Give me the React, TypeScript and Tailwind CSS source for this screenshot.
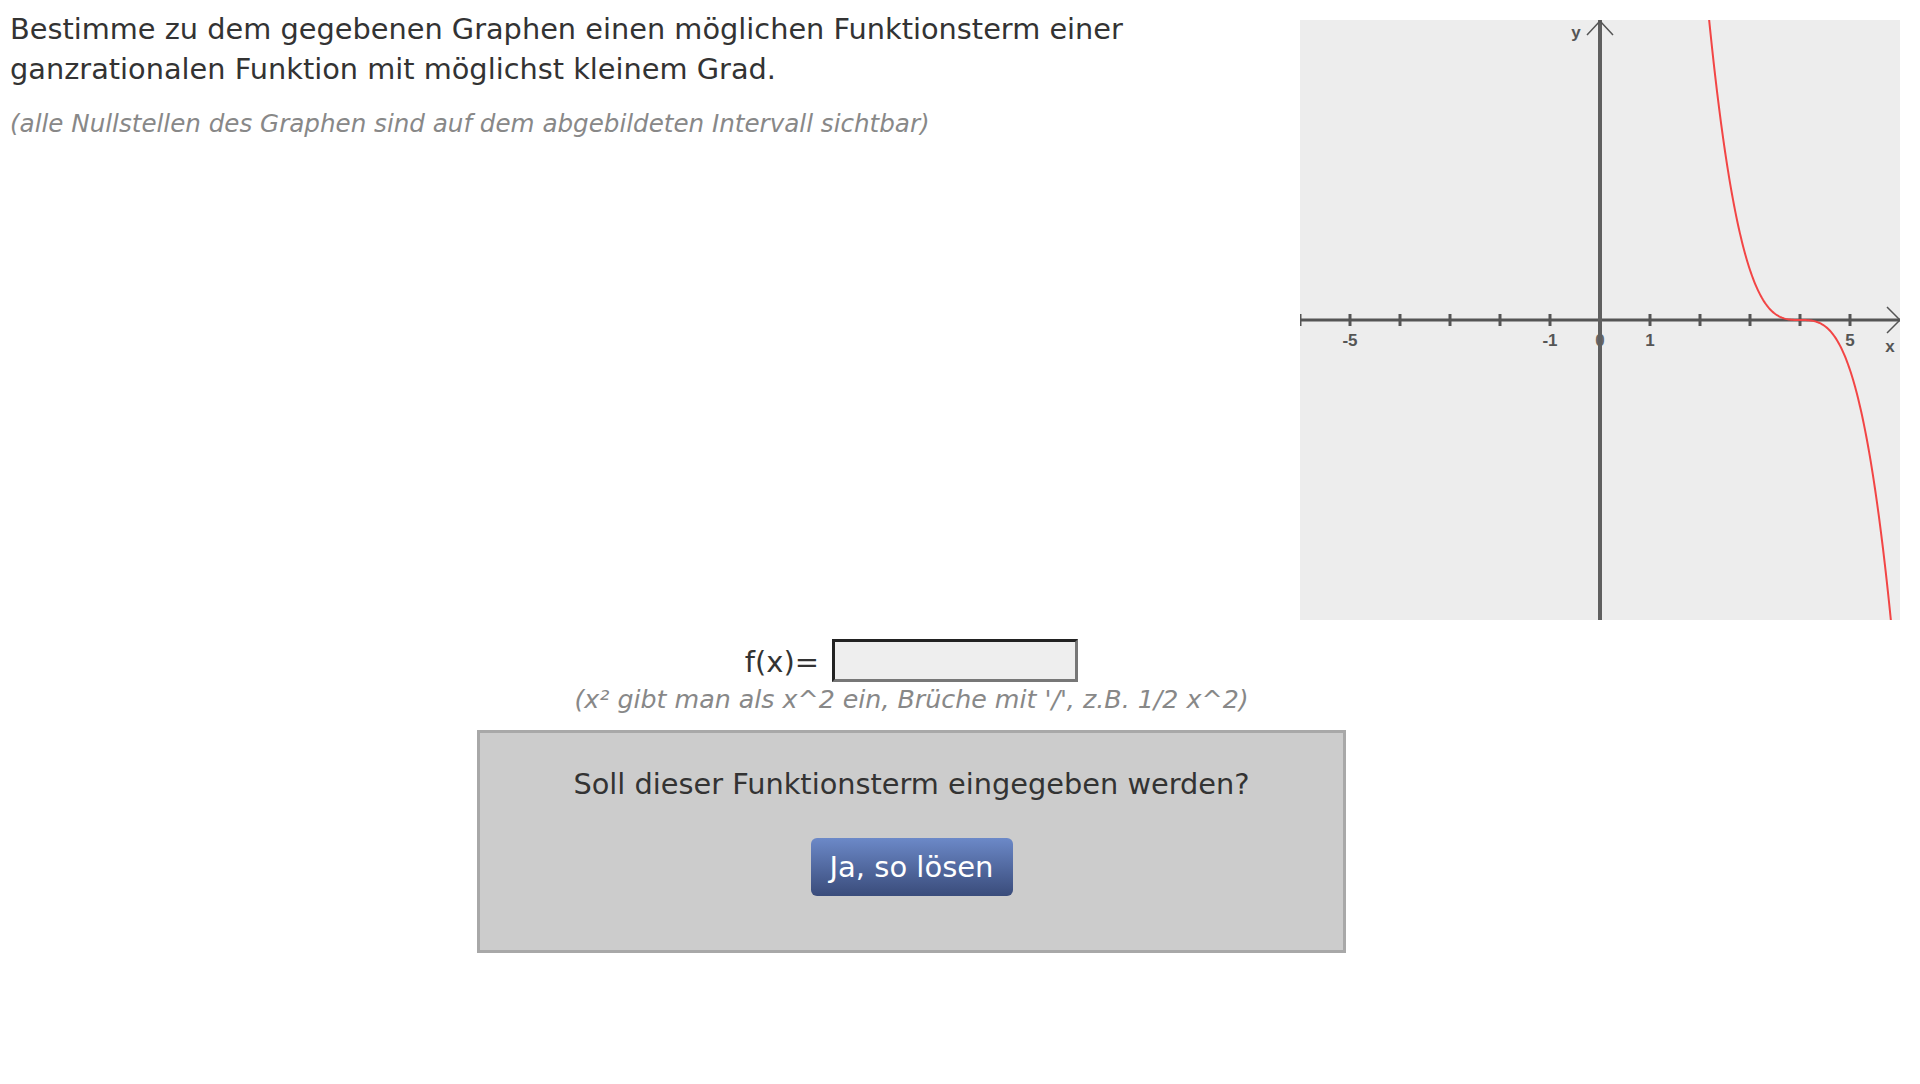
import React from 'react';

// f(x) = -(x - 4)^3, triple zero at x = 4
const f = (x: number) => -Math.pow(x - 4, 3);

const curvePath = () => {
  const pts: string[] = [];
  for (let x = 2.0; x <= 6.1; x += 0.02) {
    const px = 300 + 50 * x;
    const py = 300 - 50 * f(x);
    pts.push(`${pts.length ? 'L' : 'M'}${px.toFixed(2)} ${py.toFixed(2)}`);
  }
  return pts.join(' ');
};

const ticks = [-6, -5, -4, -3, -2, -1, 0, 1, 2, 3, 4, 5];

const labels = [
  { t: '-5', x: 50 },
  { t: '-1', x: 250 },
  { t: '1', x: 350 },
  { t: '5', x: 550 },
];

const Graph: React.FC = () => (
  <svg width="600" height="600" viewBox="0 0 600 600" className="block bg-[#ededed]">
    {/* x axis */}
    <line x1="0" y1="300" x2="600" y2="300" stroke="#555" strokeWidth="3" />
    {ticks.map((t) => (
      <line key={t} x1={300 + 50 * t} y1="294" x2={300 + 50 * t} y2="306" stroke="#555" strokeWidth="3" />
    ))}
    <polyline points="587,287 600,300 587,313" fill="none" stroke="#555" strokeWidth="1.5" />
    {/* labels */}
    <g fontFamily="'Liberation Sans', Arial, sans-serif" fontWeight="700" fontSize="17" fill="#555" textAnchor="middle">
      {labels.map((l) => (
        <text key={l.t} x={l.x} y="326">
          {l.t}
        </text>
      ))}
      <text x="300" y="326" fill="#666">0</text>
      <text x="590" y="332">x</text>
      <text x="276" y="18">y</text>
    </g>
    {/* y axis */}
    <line x1="300" y1="0" x2="300" y2="600" stroke="#5f5f5f" strokeWidth="4" />
    <polyline points="287,15 300,1 313,15" fill="none" stroke="#555" strokeWidth="1.5" />
    {/* curve */}
    <path d={curvePath()} fill="none" stroke="#f24545" strokeWidth="2" />
  </svg>
);

export default function App() {
  return (
    <div className="w-[1920px] min-h-[1084px] bg-white text-[#333] font-['DejaVu_Sans',Verdana,sans-serif]">
      <div className="flex justify-between">
        <div className="flex-1 pl-[10px] pt-[9px] pr-[20px]">
          <p className="text-[28.8px] leading-[40px]">
            Bestimme zu dem gegebenen Graphen einen möglichen Funktionsterm einer ganzrationalen Funktion mit möglichst kleinem Grad.
          </p>
          <p className="mt-[19px] text-[24.6px] leading-[32px] italic text-[#888]">
            (alle Nullstellen des Graphen sind auf dem abgebildeten Intervall sichtbar)
          </p>
        </div>
        <div className="mt-[20px] mr-[20px]">
          <Graph />
        </div>
      </div>

      <div className="w-[1823px] flex flex-col items-center mt-[18px]">
        <div className="flex items-center">
          <span className="text-[29px] leading-[40px] mt-[4px]">f(x)=</span>
          <input
            type="text"
            className="ml-[13px] w-[246px] h-[43px] bg-[#eeeeee] border-[3px] border-t-[#222] border-l-[#222] border-b-[#777] border-r-[#777] outline-none"
          />
        </div>
        <p className="text-[25.3px] leading-[34px] italic text-[#888] mt-[1px]">
          (x² gibt man als x^2 ein, Brüche mit '/', z.B. 1/2 x^2)
        </p>
        <div className="mt-[13px] w-[869px] h-[223px] bg-[#cccccc] border-[3px] border-[#a8a8a8] flex flex-col items-center pt-[31px]">
          <p className="text-[28.8px] leading-[40px] text-[#333]">Soll dieser Funktionsterm eingegeben werden?</p>
          <button className="mt-[34px] w-[202px] h-[58px] rounded-[6px] bg-linear-to-b from-[#6c89c8] to-[#3a4c7b] text-white text-[29px] leading-[40px]">
            Ja, so lösen
          </button>
        </div>
      </div>
    </div>
  );
}
